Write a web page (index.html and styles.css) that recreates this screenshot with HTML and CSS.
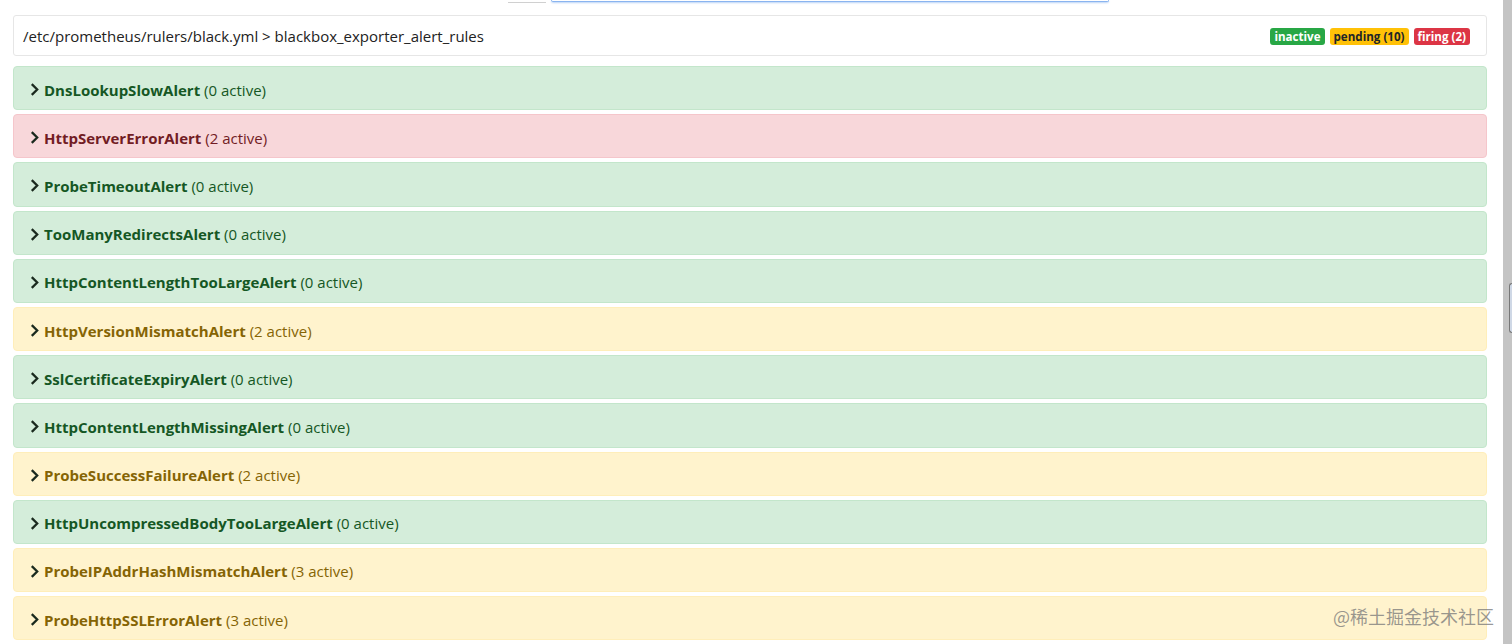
FILE: index.html
```html
<!DOCTYPE html>
<html>
<head>
<meta charset="utf-8">
<link rel="stylesheet" href="styles.css">
</head>
<body>
<div class="viewport">
  <main class="page">
    <div class="topbar">
      <div class="btn-stub"></div>
      <div class="input-stub"></div>
    </div>
    <div class="group-head">
      <span class="group-title">/etc/prometheus/rulers/black.yml &gt; blackbox_exporter_alert_rules</span>
      <div class="badges">
        <span class="badge b-inactive">inactive</span>
        <span class="badge b-pending">pending (10)</span>
        <span class="badge b-firing">firing (2)</span>
      </div>
    </div>
    <div class="rules">
      <div class="rule ok"><svg class="chev" viewBox="0 0 8 12"><path d="M1.5 1 L6.5 6 L1.5 11"/></svg><b>DnsLookupSlowAlert</b>&nbsp;(0 active)</div>
      <div class="rule fire"><svg class="chev" viewBox="0 0 8 12"><path d="M1.5 1 L6.5 6 L1.5 11"/></svg><b>HttpServerErrorAlert</b>&nbsp;(2 active)</div>
      <div class="rule ok"><svg class="chev" viewBox="0 0 8 12"><path d="M1.5 1 L6.5 6 L1.5 11"/></svg><b>ProbeTimeoutAlert</b>&nbsp;(0 active)</div>
      <div class="rule ok"><svg class="chev" viewBox="0 0 8 12"><path d="M1.5 1 L6.5 6 L1.5 11"/></svg><b>TooManyRedirectsAlert</b>&nbsp;(0 active)</div>
      <div class="rule ok"><svg class="chev" viewBox="0 0 8 12"><path d="M1.5 1 L6.5 6 L1.5 11"/></svg><b>HttpContentLengthTooLargeAlert</b>&nbsp;(0 active)</div>
      <div class="rule pend"><svg class="chev" viewBox="0 0 8 12"><path d="M1.5 1 L6.5 6 L1.5 11"/></svg><b>HttpVersionMismatchAlert</b>&nbsp;(2 active)</div>
      <div class="rule ok"><svg class="chev" viewBox="0 0 8 12"><path d="M1.5 1 L6.5 6 L1.5 11"/></svg><b>SslCertificateExpiryAlert</b>&nbsp;(0 active)</div>
      <div class="rule ok"><svg class="chev" viewBox="0 0 8 12"><path d="M1.5 1 L6.5 6 L1.5 11"/></svg><b>HttpContentLengthMissingAlert</b>&nbsp;(0 active)</div>
      <div class="rule pend"><svg class="chev" viewBox="0 0 8 12"><path d="M1.5 1 L6.5 6 L1.5 11"/></svg><b>ProbeSuccessFailureAlert</b>&nbsp;(2 active)</div>
      <div class="rule ok"><svg class="chev" viewBox="0 0 8 12"><path d="M1.5 1 L6.5 6 L1.5 11"/></svg><b>HttpUncompressedBodyTooLargeAlert</b>&nbsp;(0 active)</div>
      <div class="rule pend"><svg class="chev" viewBox="0 0 8 12"><path d="M1.5 1 L6.5 6 L1.5 11"/></svg><b>ProbeIPAddrHashMismatchAlert</b>&nbsp;(3 active)</div>
      <div class="rule pend"><svg class="chev" viewBox="0 0 8 12"><path d="M1.5 1 L6.5 6 L1.5 11"/></svg><b>ProbeHttpSSLErrorAlert</b>&nbsp;(3 active)</div>
    </div>
  </main>
  <div class="scrollbar"><div class="thumb"></div></div>
</div>
<div class="watermark">@稀土掘金技术社区</div>
</body>
</html>
```

FILE: styles.css
```css
html, body {
  margin: 0;
  padding: 0;
  height: 644px;
  overflow: hidden;
  background: #fff;
  font-family: "Open Sans", "Noto Sans", "Noto Sans CJK SC", sans-serif;
  color: #212529;
}
.viewport {
  display: flex;
  height: 644px;
}
.page {
  flex: 1;
  padding: 0 16px 0 13px;
  min-width: 0;
}
.topbar {
  height: 3px;
  display: flex;
}
.btn-stub {
  margin-left: 495px;
  width: 38px;
  height: 2px;
  border-bottom: 1px solid #d0d0d0;
}
.input-stub {
  margin-left: 5px;
  width: 556px;
  height: 1px;
  border: 1px solid #8ab4f0;
  border-top: none;
  border-radius: 0 0 3px 3px;
  box-shadow: 0 1px 2px #b8d2f5;
}
.group-head {
  margin-top: 12px;
  border: 1px solid #e6e6e6;
  border-radius: 3px;
  display: flex;
  align-items: center;
  justify-content: space-between;
  padding: 1px 16px 0 9px;
  box-sizing: border-box;
  height: 41px;
}
.group-title {
  font-size: 15px;
  color: #222;
}
.badges {
  display: flex;
  gap: 5px;
  padding-top: 1px;
}
.badge {
  font-size: 11.6px;
  font-weight: 700;
  padding: 1px 4px 1px;
  border-radius: 3px;
  line-height: 15px;
}
.b-inactive { background: #28a745; color: #fff; }
.b-pending { background: #ffc107; color: #212529; }
.b-firing { background: #dc3545; color: #fff; }
.rules {
  margin-top: 10px;
  display: flex;
  flex-direction: column;
  gap: 4px;
}
.rule {
  height: 44.2px;
  box-sizing: border-box;
  border: 1px solid transparent;
  border-radius: 4px;
  display: flex;
  align-items: center;
  padding: 3px 0 0 16px;
  font-size: 15px;
  white-space: nowrap;
}
.rule b { font-weight: 700; }
.chev {
  width: 9px;
  height: 13px;
  margin-right: 5px;
  fill: none;
  stroke: #1a2a1e;
  stroke-width: 2.1;
}
.ok { background: #d4edda; border-color: #c3e6cb; color: #155724; }
.fire { background: #f8d7da; border-color: #f5c6cb; color: #721c24; }
.pend { background: #fff3cd; border-color: #ffeeba; color: #856404; }
.scrollbar {
  width: 9px;
  background: #c4c4c4;
  position: relative;
}
.thumb {
  position: absolute;
  left: 6px;
  top: 283px;
  width: 3px;
  height: 48px;
  border: 1px solid #777;
  border-right: none;
  border-radius: 3px 0 0 3px;
  background: #cfd8e6;
}
.watermark {
  position: absolute;
  left: 1333px;
  top: 603px;
  font-size: 18px;
  color: rgba(120,120,120,0.75);
  font-family: "Noto Sans CJK SC", sans-serif;
}
```
